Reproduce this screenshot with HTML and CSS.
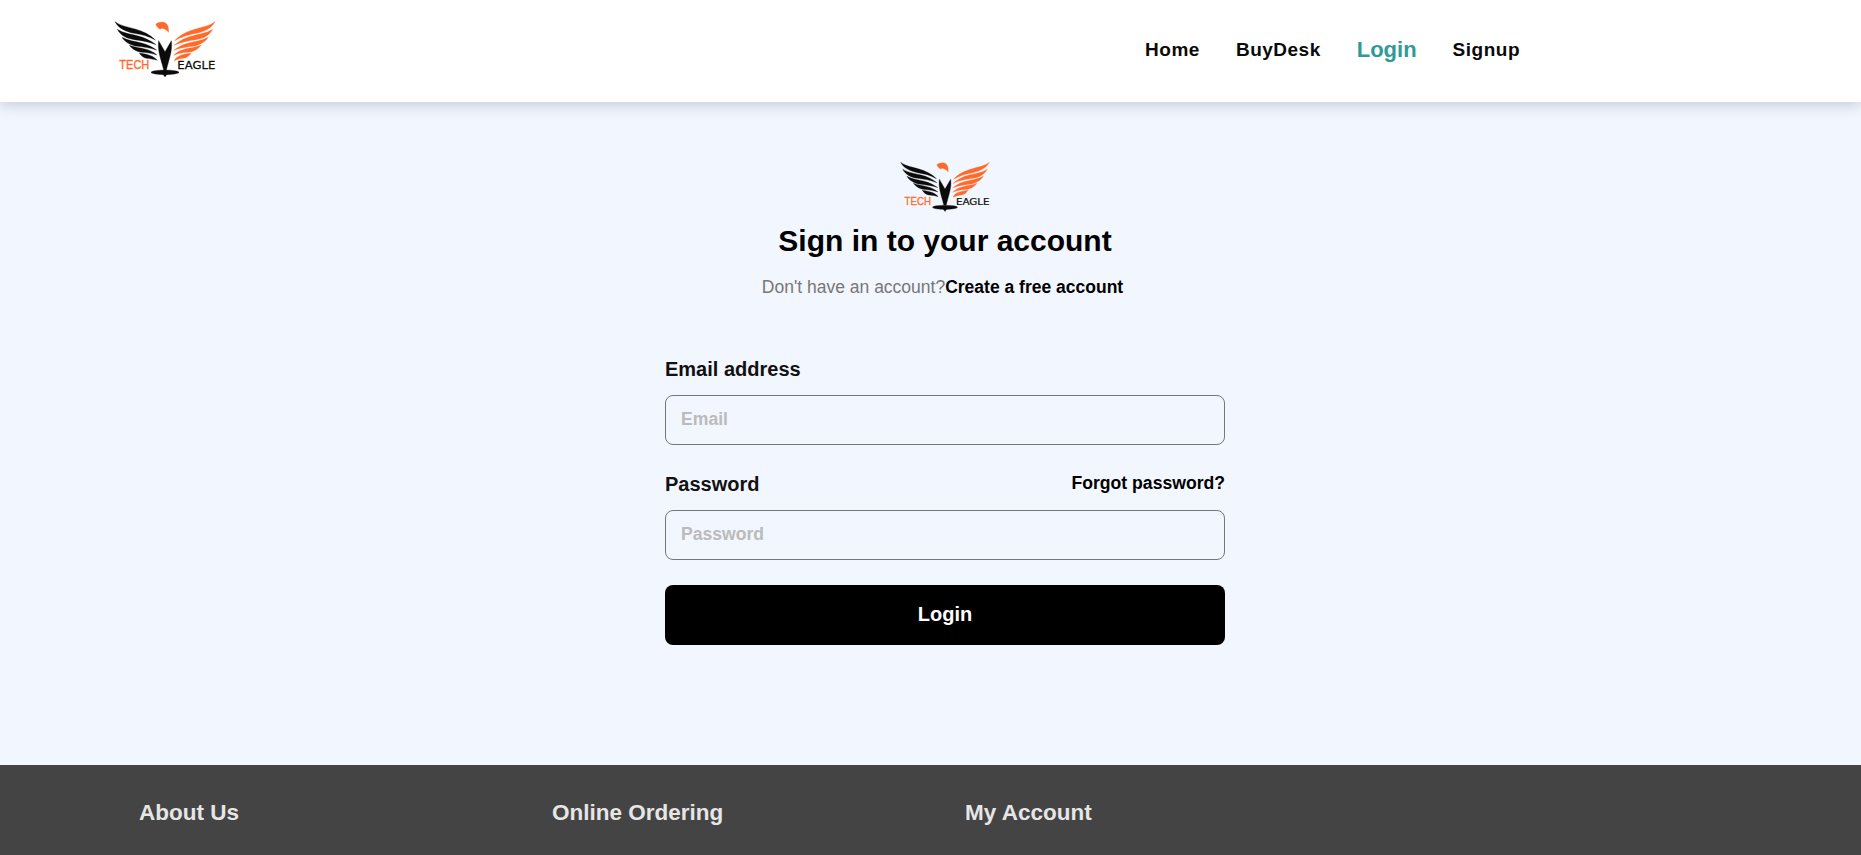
FILE: index.html
```html
<!DOCTYPE html>
<html lang="en">
<head>
<meta charset="utf-8">
<title>Sign in</title>
<link rel="stylesheet" href="styles.css">
</head>
<body>
<header class="site-header">
  <a class="brand" href="#">
    <svg class="logo" viewBox="0 0 390 240" role="img" aria-label="Tech Eagle">
      <g class="wing-dark">
        <path d="M45 35C60 47 80 50 105 57C130 64 150 74 166 90C145 78 125 74 102 70C78 65 55 55 45 35Z"/>
        <path d="M52 58C70 70 92 72 115 78C135 83 152 92 168 104C145 95 125 92 102 89C82 86 62 78 52 58Z"/>
        <path d="M66 82C84 92 105 94 125 99C142 103 156 111 170 120C150 114 130 111 112 109C94 107 76 98 66 82Z"/>
        <path d="M88 106C104 112 122 114 138 118C150 121 161 127 171 135C155 130 140 128 126 127C112 126 97 119 88 106Z"/>
        <path d="M118 129C130 131 142 133 152 137C160 140 167 145 172 151C160 147 150 146 140 145C131 144 123 137 118 129Z"/>
        <path d="M176 92L195 125L214 92C218 115 210 140 203 165L199 180H191L187 165C180 140 172 115 176 92Z"/>
        <ellipse cx="195" cy="187" rx="42" ry="7"/>
        <path d="M187 190H203L195 201Z"/>
      </g>
      <g class="wing-light">
        <path d="M345 35C330 47 310 50 287 57C262 64 240 74 224 92C245 80 266 74 288 70C312 65 335 55 345 35Z"/>
        <path d="M338 58C320 70 298 72 276 78C256 83 238 92 222 106C245 96 265 92 288 89C308 86 328 78 338 58Z"/>
        <path d="M325 82C306 92 286 94 266 99C248 103 234 111 221 121C240 114 260 111 278 109C296 107 314 98 325 82Z"/>
        <path d="M303 106C287 112 269 114 253 118C240 121 230 127 221 136C236 130 250 128 264 127C279 126 294 119 303 106Z"/>
        <path d="M273 129C261 131 249 133 239 137C231 140 226 145 222 153C232 148 242 146 251 145C260 144 268 137 273 129Z"/>
        <path d="M167 43C175 36 190 34 197 39C205 45 206 56 206 67C200 61 193 56 186 55C181 58 177 57 174 53C171 50 169 47 167 43Z"/>
      </g>
      <text class="logo-tech" x="58" y="178" textLength="90" lengthAdjust="spacingAndGlyphs">TECH</text>
      <text class="logo-eagle" x="232" y="178" textLength="114" lengthAdjust="spacingAndGlyphs">EAGLE</text>
    </svg>
  </a>
  <nav class="main-nav">
    <a class="nav-link" href="#">Home</a>
    <a class="nav-link" href="#">BuyDesk</a>
    <a class="nav-link nav-active" href="#">Login</a>
    <a class="nav-link" href="#">Signup</a>
  </nav>
</header>

<main class="auth">
  <svg class="logo-small" viewBox="0 0 390 240" role="img" aria-label="Tech Eagle">
    <g class="wing-dark">
      <path d="M45 35C60 47 80 50 105 57C130 64 150 74 166 90C145 78 125 74 102 70C78 65 55 55 45 35Z"/>
      <path d="M52 58C70 70 92 72 115 78C135 83 152 92 168 104C145 95 125 92 102 89C82 86 62 78 52 58Z"/>
      <path d="M66 82C84 92 105 94 125 99C142 103 156 111 170 120C150 114 130 111 112 109C94 107 76 98 66 82Z"/>
      <path d="M88 106C104 112 122 114 138 118C150 121 161 127 171 135C155 130 140 128 126 127C112 126 97 119 88 106Z"/>
      <path d="M118 129C130 131 142 133 152 137C160 140 167 145 172 151C160 147 150 146 140 145C131 144 123 137 118 129Z"/>
      <path d="M176 92L195 125L214 92C218 115 210 140 203 165L199 180H191L187 165C180 140 172 115 176 92Z"/>
      <ellipse cx="195" cy="187" rx="42" ry="7"/>
      <path d="M187 190H203L195 201Z"/>
    </g>
    <g class="wing-light">
      <path d="M345 35C330 47 310 50 287 57C262 64 240 74 224 92C245 80 266 74 288 70C312 65 335 55 345 35Z"/>
      <path d="M338 58C320 70 298 72 276 78C256 83 238 92 222 106C245 96 265 92 288 89C308 86 328 78 338 58Z"/>
      <path d="M325 82C306 92 286 94 266 99C248 103 234 111 221 121C240 114 260 111 278 109C296 107 314 98 325 82Z"/>
      <path d="M303 106C287 112 269 114 253 118C240 121 230 127 221 136C236 130 250 128 264 127C279 126 294 119 303 106Z"/>
      <path d="M273 129C261 131 249 133 239 137C231 140 226 145 222 153C232 148 242 146 251 145C260 144 268 137 273 129Z"/>
      <path d="M167 43C175 36 190 34 197 39C205 45 206 56 206 67C200 61 193 56 186 55C181 58 177 57 174 53C171 50 169 47 167 43Z"/>
    </g>
    <text class="logo-tech" x="58" y="178" textLength="90" lengthAdjust="spacingAndGlyphs">TECH</text>
    <text class="logo-eagle" x="232" y="178" textLength="114" lengthAdjust="spacingAndGlyphs">EAGLE</text>
  </svg>
  <h1 class="auth-title">Sign in to your account</h1>
  <p class="auth-sub">Don't have an account?<a class="auth-sub-link" href="#">Create a free account</a></p>
  <form class="auth-form">
    <div class="field">
      <label class="field-label" for="email">Email address</label>
      <input class="field-input" id="email" type="email" placeholder="Email">
    </div>
    <div class="field">
      <div class="field-row">
        <label class="field-label" for="password">Password</label>
        <a class="forgot" href="#">Forgot password?</a>
      </div>
      <input class="field-input" id="password" type="password" placeholder="Password">
    </div>
    <button class="submit" type="button">Login</button>
  </form>
</main>

<footer class="site-footer">
  <h2 class="footer-title">About Us</h2>
  <h2 class="footer-title">Online Ordering</h2>
  <h2 class="footer-title">My Account</h2>
</footer>
</body>
</html>
```
FILE: styles.css
```css
* { box-sizing: border-box; }
html, body { margin: 0; height: 855px; overflow: hidden; }
body {
  background: #f2f6fe;
  font-family: "Liberation Sans", Arial, sans-serif;
  display: flex;
  flex-direction: column;
}
a { text-decoration: none; color: inherit; }

.wing-dark { fill: #0b0b0b; stroke: #0b0b0b; stroke-width: 1; }
.wing-light { fill: #ff6a2b; stroke: #ff6a2b; stroke-width: 1; }
.logo-tech { font: 400 38px "Liberation Sans", sans-serif; fill: #ff6a2b; stroke: #ff6a2b; stroke-width: 1; }
.logo-eagle { font: 400 32px "DejaVu Sans", sans-serif; fill: #111; stroke: #111; stroke-width: 0.8; }

.site-header {
  height: 102px;
  flex: none;
  background: #fff;
  display: flex;
  align-items: flex-start;
  justify-content: space-between;
  padding: 10px 0 0 100px;
  box-shadow: 0 4px 12px rgba(60, 70, 100, 0.22);
  position: relative;
}
.brand { display: block; height: 80px; }
.logo { display: block; width: 130px; height: 80px; }
.main-nav {
  display: flex;
  align-items: center;
  gap: 36px;
  height: 80px;
  margin-right: 341px;
}
.nav-link { font-size: 19px; font-weight: 700; letter-spacing: 0.5px; color: #0a0a0a; }
.nav-active { font-size: 22px; letter-spacing: 0; color: #2f9a98; }

.auth {
  flex: 1;
  display: flex;
  flex-direction: column;
  align-items: center;
  padding: 50px 0 0 29px;
}
.logo-small { display: block; width: 116px; height: 71px; flex: none; }
.auth-title { margin: 1px 0 0; font-size: 30px; line-height: 34px; font-weight: 700; color: #000; }
.auth-sub { margin: 17px 0 0; padding-right: 5px; font-size: 17.5px; line-height: 24px; color: #777; }
.auth-sub-link { font-weight: 700; color: #000; }
.auth-form { width: 560px; margin-top: 58px; display: flex; flex-direction: column; }
.field { display: flex; flex-direction: column; margin-bottom: 25px; }
.field-row { display: flex; justify-content: space-between; align-items: center; padding-top: 2px; }
.field-label { font-size: 20px; line-height: 24px; font-weight: 700; color: #111; margin-bottom: 14px; }
.forgot { font-size: 17.6px; font-weight: 700; color: #000; margin-bottom: 15px; }
.field-input {
  height: 50px;
  border: 1px solid #777;
  border-radius: 8px;
  background: transparent;
  padding: 0 15px 2px;
  font: 700 17.6px "Liberation Sans", sans-serif;
}
.field-input::placeholder { color: #bbb; opacity: 1; }
.submit {
  height: 60px;
  border: 0;
  border-radius: 8px;
  background: #000;
  color: #fff;
  padding: 0 0 2px;
  font: 700 20px "Liberation Sans", sans-serif;
}

.site-footer {
  height: 90px;
  flex: none;
  background: #444;
  display: grid;
  grid-template-columns: repeat(3, 413px);
  padding: 34px 0 0 139px;
}
.footer-title { margin: 0; font-size: 22.5px; line-height: 28px; font-weight: 700; color: #e6e6e6; }
```
